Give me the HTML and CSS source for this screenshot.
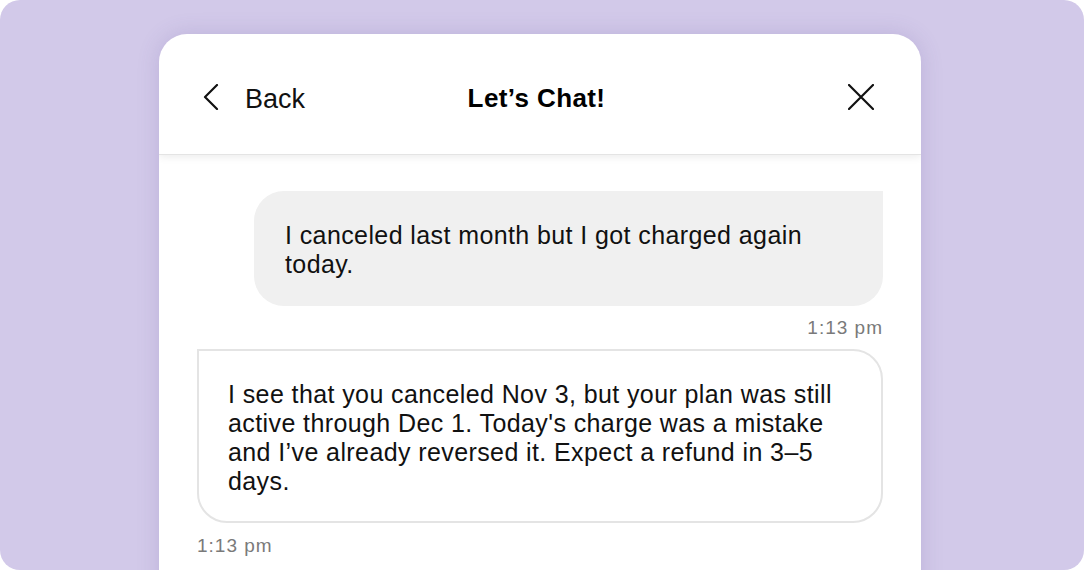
FILE: index.html
```html
<!DOCTYPE html>
<html>
<head>
<meta charset="utf-8">
<link rel="stylesheet" href="styles.css">
</head>
<body>
<div class="stage">
  <div class="card">
    <header class="header">
      <div class="back">
        <svg class="chev" width="16" height="26" viewBox="0 0 16 26"><path d="M14 1 L2 13 L14 25" fill="none" stroke="#111" stroke-width="2.2" stroke-linecap="round" stroke-linejoin="round"/></svg>
        <span class="back-label">Back</span>
      </div>
      <h1 class="title">Let’s Chat!</h1>
      <div class="close">
        <svg width="26" height="26" viewBox="0 0 26 26"><path d="M1 1 L25 25 M25 1 L1 25" fill="none" stroke="#111" stroke-width="2.2" stroke-linecap="round"/></svg>
      </div>
    </header>
    <main class="messages">
      <div class="msg msg-user">
        <div class="bubble bubble-user">I canceled last month but I got charged again today.</div>
        <div class="time">1:13 pm</div>
      </div>
      <div class="msg msg-bot">
        <div class="bubble bubble-bot">I see that you canceled Nov 3, but your plan was still active through Dec 1. Today's charge was a mistake and I’ve already reversed it. Expect a refund in 3–5 days.</div>
        <div class="time">1:13 pm</div>
      </div>
    </main>
  </div>
</div>
</body>
</html>
```

FILE: styles.css
```css
* { box-sizing: border-box; }
html, body { margin: 0; padding: 0; background: #fff; }
body { width: 1084px; height: 570px; overflow: hidden; font-family: "Liberation Sans", Arial, sans-serif; color: #111; }
.stage {
  width: 1084px; height: 570px; background: #d2c9e9; border-radius: 20px;
  padding: 34px 0 0 159px; overflow: hidden;
}
.card {
  width: 762px; height: 560px; background: #fff; border-radius: 28px 28px 0 0;
  box-shadow: 0 0 22px rgba(90, 70, 150, 0.18);
  overflow: hidden;
}
.header {
  height: 121px; display: grid; grid-template-columns: 1fr auto 1fr; align-items: center;
  padding: 5px 47px 0 44px;
  border-bottom: 1px solid #e4e4e4;
  box-shadow: 0 2px 8px rgba(0,0,0,0.08);
  position: relative; z-index: 1;
}
.back { display: flex; align-items: center; gap: 26px; }
.chev { display: block; }
.back-label { font-size: 27px; color: #111; position: relative; top: 3px; }
.title { margin: 0; font-size: 26px; font-weight: 700; color: #000; letter-spacing: 0.4px; padding-right: 4px; position: relative; top: 2px; }
.close { display: flex; justify-content: flex-end; }
.close svg { display: block; }
.messages { padding: 36px 38px 0 38px; display: flex; flex-direction: column; }
.msg { display: flex; flex-direction: column; }
.msg-user { align-items: flex-end; }
.msg-bot { align-items: flex-start; margin-top: 10px; }
.bubble { font-size: 25px; line-height: 29px; letter-spacing: 0.4px; }
.bubble-user {
  width: 629px; background: #f0f0f0; border-radius: 30px 0 30px 30px;
  padding: 30px 40px 27px 31px;
}
.bubble-bot {
  width: 686px; background: #fff; border: 2px solid #e4e4e4; border-radius: 0 30px 30px 30px;
  padding: 29px 30px 25px 29px;
}
.time { font-size: 19px; line-height: 22px; color: #7a7a7a; margin-top: 11px; letter-spacing: 1px; }
.msg-bot .time { margin-top: 12px; }
```
